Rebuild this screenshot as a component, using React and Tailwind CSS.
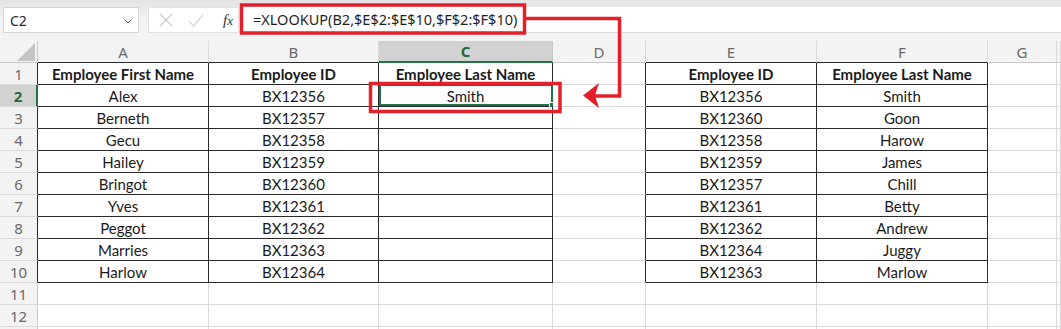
const COLS = [
  { key: 'A', w: 'w-[171px]' },
  { key: 'B', w: 'w-[170px]' },
  { key: 'C', w: 'w-[174px]' },
  { key: 'D', w: 'w-[93px]' },
  { key: 'E', w: 'w-[171px]' },
  { key: 'F', w: 'w-[171px]' },
  { key: 'G', w: 'w-[69px]' },
  { key: 'H', w: 'flex-1' },
];

const LEFT = [
  ['Employee First Name', 'Employee ID', 'Employee Last Name'],
  ['Alex', 'BX12356', 'Smith'],
  ['Berneth', 'BX12357', ''],
  ['Gecu', 'BX12358', ''],
  ['Hailey', 'BX12359', ''],
  ['Bringot', 'BX12360', ''],
  ['Yves', 'BX12361', ''],
  ['Peggot', 'BX12362', ''],
  ['Marries', 'BX12363', ''],
  ['Harlow', 'BX12364', ''],
];

const RIGHT = [
  ['Employee ID', 'Employee Last Name'],
  ['BX12356', 'Smith'],
  ['BX12360', 'Goon'],
  ['BX12358', 'Harow'],
  ['BX12359', 'James'],
  ['BX12357', 'Chill'],
  ['BX12361', 'Betty'],
  ['BX12362', 'Andrew'],
  ['BX12364', 'Juggy'],
  ['BX12363', 'Marlow'],
];

const TABLE_COLS = ['A', 'B', 'C', 'E', 'F'];

function inTable(r, c) {
  return r >= 1 && r <= 10 && TABLE_COLS.includes(c);
}

function cellValue(r, c) {
  if (r < 1 || r > 10) return '';
  const i = ['A', 'B', 'C'].indexOf(c);
  if (i >= 0) return LEFT[r - 1][i];
  const j = ['E', 'F'].indexOf(c);
  if (j >= 0) return RIGHT[r - 1][j];
  return '';
}

function nextCol(c) {
  const i = COLS.findIndex((x) => x.key === c);
  return COLS[i + 1]?.key;
}

function FormulaBar() {
  return (
    <div className="h-[41px] bg-gradient-to-b from-[#e4e4e4] via-[#f3f3f3] to-[#f3f3f3] pt-[7px] flex">
      <div className="ml-[3px] w-[136px] h-[26px] bg-white border border-[#d6d6d6] flex items-center justify-between pl-[6px] pr-[6px] text-[14px] text-[#262626]">
        <span>C2</span>
        <svg width="8" height="5" viewBox="0 0 8 5" className="mt-[2px]">
          <path d="M0.5 0.5 L4 4 L7.5 0.5" fill="none" stroke="#555" strokeWidth="1" />
        </svg>
      </div>
      <div className="ml-[9px] w-[91px] h-[26px] bg-white border border-[#e2e2e2] flex items-center">
        <svg width="14" height="14" viewBox="0 0 14 14" className="ml-[10px]">
          <path d="M1 1 L13 13 M13 1 L1 13" stroke="#c8c8c8" strokeWidth="1.1" />
        </svg>
        <svg width="16" height="13" viewBox="0 0 16 13" className="ml-[15px]">
          <path d="M1 7 L5.5 12 L15 1" fill="none" stroke="#c8c8c8" strokeWidth="1.1" />
        </svg>
        <span className="ml-[19px] text-[15px] italic text-[#333]" style={{ fontFamily: '"Liberation Serif", serif' }}>
          f<span className="text-[13px]">x</span>
        </span>
      </div>
      <div className="ml-[2px] flex-1 h-[26px] bg-white border-b border-[#dadada] flex items-center pl-[12px] text-[14.5px] text-[#1f1f1f]">
        =XLOOKUP(B2,$E$2:$E$10,$F$2:$F$10)
      </div>
    </div>
  );
}

function HeaderRow() {
  return (
    <div className="flex h-[22px]">
      <div className="w-[38px] h-full bg-[#f3f3f3] border-r border-b border-[#c9c9c9] relative overflow-hidden">
        <svg width="38" height="22" viewBox="0 0 38 22" className="absolute inset-0">
          <polygon points="35,2 35,20 17,20" fill="#c4c4c4" />
        </svg>
      </div>
      {COLS.map((col) => {
        const sel = col.key === 'C';
        const bottom = inTable(1, col.key);
        return (
          <div
            key={col.key}
            className={
              col.w +
              ' h-full flex items-center justify-center pt-[1px] text-[15px] border-r ' +
              (sel
                ? 'bg-[#d2d2d2] text-[#1e6b3e] font-bold border-r-[#c9c9c9] border-b-2 border-b-[#217346]'
                : 'bg-[#f3f3f3] text-[#6a6a6a] border-r-[#dadada] border-b ' +
                  (bottom ? 'border-b-[#2a2a2a]' : 'border-b-[#c9c9c9]'))
            }
          >
            {col.key === 'H' ? '' : col.key}
          </div>
        );
      })}
    </div>
  );
}

function Row({ r }) {
  const sel = r === 2;
  return (
    <div className="flex h-[22px]">
      <div
        className={
          'w-[38px] h-full flex items-center justify-center pt-[1px] text-[15px] border-b border-b-[#dadada] ' +
          (sel
            ? 'bg-[#d2d2d2] text-[#1e6b3e] font-bold border-r-2 border-r-[#217346]'
            : 'bg-[#f3f3f3] text-[#6a6a6a] border-r ' + (inTable(r, 'A') ? 'border-r-[#2a2a2a]' : 'border-r-[#c9c9c9]'))
        }
        style={{ fontFamily: '"Noto Sans", "Open Sans", sans-serif' }}
      >
        {r <= 12 ? r : ''}
      </div>
      {COLS.map((col) => {
        const t = inTable(r, col.key);
        const right = t || inTable(r, nextCol(col.key));
        const bottom = t || inTable(r + 1, col.key);
        const val = cellValue(r, col.key);
        const isSel = r === 2 && col.key === 'C';
        return (
          <div
            key={col.key}
            className={
              col.w +
              ' h-full relative flex items-center justify-center pt-[2px] text-[15px] text-[#1a1a1a] bg-white border-r border-b ' +
              (right ? 'border-r-[#2a2a2a] ' : 'border-r-[#dadada] ') +
              (bottom ? 'border-b-[#2a2a2a] ' : 'border-b-[#dadada] ') +
              (r === 1 ? 'font-bold' : '')
            }
          >
            {val}
            {isSel && (
              <div className="absolute left-0 -top-px right-[-1px] bottom-0 border-2 border-[#217346]">
                <div className="absolute right-[-4px] bottom-[-4px] w-[6px] h-[6px] bg-[#217346] border border-white" />
              </div>
            )}
          </div>
        );
      })}
    </div>
  );
}

function Annotations() {
  const red = '#e3202a';
  return (
    <svg width="1061" height="329" viewBox="0 0 1061 329" className="absolute left-0 top-0 pointer-events-none">
      <rect x="241.5" y="5" width="283" height="28" fill="none" stroke={red} strokeWidth="3.5" />
      <rect x="370.5" y="83.5" width="189.5" height="28" fill="none" stroke={red} strokeWidth="3.5" />
      <path d="M526 18.5 H619.5 V96 H594" fill="none" stroke={red} strokeWidth="3.5" />
      <polygon points="583,95.5 599,83 595,95.5 599,108" fill={red} />
    </svg>
  );
}

export default function App() {
  return (
    <div className="relative w-[1061px] h-[329px] overflow-hidden bg-[#f3f3f3]" style={{ fontFamily: 'Lato, "Noto Sans", sans-serif' }}>
      <div style={{ fontFamily: '"Noto Sans", "Open Sans", sans-serif' }}>
        <FormulaBar />
      </div>
      <div className="flex flex-col">
        <div style={{ fontFamily: '"Noto Sans", "Open Sans", sans-serif' }}>
          <HeaderRow />
        </div>
        {Array.from({ length: 13 }, (_, i) => (
          <Row key={i} r={i + 1} />
        ))}
      </div>
      <Annotations />
    </div>
  );
}
